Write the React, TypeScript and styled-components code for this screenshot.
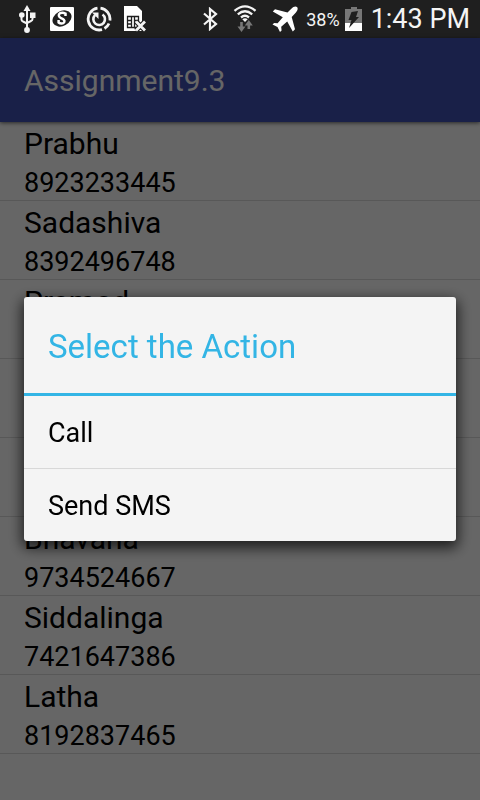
import React from "react";
import styled, { createGlobalStyle } from "styled-components";

const GlobalStyle = createGlobalStyle`
  *, *::before, *::after { box-sizing: border-box; }
  body {
    margin: 0;
    background: #ffffff;
    color: #000000;
    font-family: Roboto, "Noto Sans", sans-serif;
  }
`;

const Screen = styled.div`
  display: flex;
  flex-direction: column;
  min-height: 100vh;
`;

const StatusBar = styled.header`
  display: flex;
  align-items: center;
  justify-content: space-between;
  height: 38px;
  padding: 0 10px 0 18px;
  background: #1f1f1f;
  color: #f4f4f4;
`;

const IconGroup = styled.div<{ $gap: number }>`
  display: flex;
  align-items: center;
  gap: ${({ $gap }) => $gap}px;
`;

const Icon = styled.svg`
  display: block;
  flex: none;
`;

const Battery = styled.div`
  display: flex;
  align-items: center;
  gap: 5px;
  font-size: 18px;
`;

const Clock = styled.time`
  font-size: 27px;
  line-height: 38px;
  white-space: nowrap;
`;

const AppBar = styled.div`
  display: flex;
  align-items: center;
  height: 84px;
  padding: 0 24px;
  background: #3f51b5;
  box-shadow: 0 1px 4px rgba(0, 0, 0, 0.6);
`;

const AppTitle = styled.h1`
  margin: 0;
  color: #ffffff;
  font-size: 30px;
  font-weight: 400;
`;

const ContactList = styled.ul`
  margin: 0;
  padding: 0;
  list-style: none;
`;

const Contact = styled.li`
  min-height: 79px;
  padding: 0 24px;
  border-bottom: 1px solid #dddddd;
`;

const ContactName = styled.div`
  font-size: 30px;
  line-height: 44px;
`;

const ContactNumber = styled.div`
  font-size: 27px;
  line-height: 34px;
`;

const Scrim = styled.div`
  position: fixed;
  inset: 38px 0 0;
  display: flex;
  align-items: center;
  justify-content: center;
  padding: 0 24px;
  background: rgba(0, 0, 0, 0.6);
`;

const Dialog = styled.section`
  width: 100%;
  overflow: hidden;
  border-radius: 3px;
  background: #f4f4f4;
  box-shadow: 0 5px 14px 2px rgba(0, 0, 0, 0.7);
`;

const DialogTitle = styled.h2`
  margin: 0;
  padding: 4px 24px 0;
  border-bottom: 3px solid #33b5e5;
  color: #33b5e5;
  font-size: 33px;
  font-weight: 400;
  line-height: 92px;
`;

const Action = styled.button`
  display: block;
  width: 100%;
  padding: 2px 24px 0;
  border: 0;
  background: transparent;
  color: #000000;
  font-family: inherit;
  font-size: 27px;
  line-height: 70px;
  text-align: left;

  & + & {
    border-top: 1px solid #d8d8d8;
  }
`;

const contacts = [
  { name: "Prabhu", number: "8923233445" },
  { name: "Sadashiva", number: "8392496748" },
  { name: "Pramod" },
  {},
  {},
  { name: "Bhavana", number: "9734524667" },
  { name: "Siddalinga", number: "7421647386" },
  { name: "Latha", number: "8192837465" },
];

const UsbIcon = () => (
  <Icon width="20" height="28" viewBox="0 0 20 28" fill="none" stroke="#f4f4f4" strokeWidth="2">
    <path d="M9 5v19M3.500 10v4.500q0 1.500 1.500 2L9 18.500M14.500 10v4q0 1.500-1.500 2L9 18" />
    <path d="M9 0l3.500 6h-7z" fill="#f4f4f4" stroke="none" />
    <circle cx="3.800" cy="10" r="2.800" fill="#f4f4f4" stroke="none" />
    <path d="M12 7.500h5.500V13H12z" fill="#f4f4f4" stroke="none" />
    <circle cx="9" cy="25" r="2.900" fill="#f4f4f4" stroke="none" />
  </Icon>
);

const SIcon = () => (
  <Icon width="24" height="24" viewBox="0 0 24 24">
    <rect width="24" height="24" rx="1" fill="#ffffff" />
    <ellipse cx="12" cy="11.500" rx="10" ry="7.500" transform="rotate(-28 12 11.500)" fill="#1f1f1f" />
    <path d="M15.500 9V6.500q-3-1.500-5.300-.3c-2.400 1.400-1.500 3.900.8 4.900 2.500 1.100 4.300 2 3.100 4.300-1.200 1.800-4 1.200-5.500 0V13" fill="none" stroke="#ffffff" strokeWidth="2.500" />
  </Icon>
);

const SyncIcon = () => (
  <Icon width="26" height="26" viewBox="0 0 26 26" fill="none" stroke="#f4f4f4">
    <path d="M14.500 2.100A11 11 0 0 1 23.900 14.500M23 17.500A11 11 0 0 1 18.500 22.500M16 23.600A11 11 0 1 1 11.500 2.100" strokeWidth="2.800" />
    <path d="M16.500 8.500A5.800 5.800 0 1 1 9 9.200" strokeWidth="2.600" />
    <path d="M6 6.500h6.500v6.500z" fill="#f4f4f4" stroke="none" />
  </Icon>
);

const SimIcon = () => (
  <Icon width="22" height="26" viewBox="0 0 22 26">
    <path d="M0 0h13l5 5v20H0z" fill="#ffffff" />
    <path d="M3.500 10.500h11v11h-11zM3.500 14.500h4M3.500 18h4M10.500 14.500h4M7.500 10.500v11M10.500 10.500v11" fill="none" stroke="#1f1f1f" strokeWidth="1.300" />
    <path d="M12 15.500l9 9M21 15.500l-9 9" stroke="#1f1f1f" strokeWidth="5" />
    <path d="M12 15.500l9 9M21 15.500l-9 9" stroke="#f4f4f4" strokeWidth="2.800" />
  </Icon>
);

const BluetoothIcon = () => (
  <Icon width="15" height="24" viewBox="0 0 15 24" fill="none" stroke="#f4f4f4" strokeWidth="2.200">
    <path d="M1 6.500l12 10.500-6 5V2l6 5L1 17.500" />
  </Icon>
);

const WifiIcon = () => (
  <Icon width="24" height="28" viewBox="0 0 24 28" fill="none" stroke="#f4f4f4" strokeWidth="2.300">
    <path d="M1.500 5.800Q12-3 22.500 5.800M4.800 9.300q7.200-6 14.400 0M8 12.500q4-3.400 8 0" />
    <path d="M9.300 14.200q2.700-2 5.400 0L12 17z" fill="#f4f4f4" stroke="none" />
    <path d="M8.500 27L4.500 21.500h2.700V17h2.600v4.500h2.700zM15.800 15l4 5.500h-2.700V24h-2.600v-3.500h-2.700z" fill="#777777" stroke="none" />
  </Icon>
);

const PlaneIcon = () => (
  <Icon width="26" height="26" viewBox="0 0 26 26" fill="#ffffff">
    <path d="M25 1c-1.600-1.300-4 0-5.400 1.400L15.500 6.500 3 3.300.8 5.500l10 5.700-5.200 6.100-3.500-.4L.5 18.500l5 2.500 2.500 5 1.600-1.600-.4-3.700 6-5.100 5.600 9.900 2.200-2.200-3.300-12.400 4-4.200C25.200 5.200 26.500 2.600 25 1z" />
  </Icon>
);

const BatteryIcon = () => (
  <Icon width="18" height="24" viewBox="0 0 18 24">
    <path d="M6 0h6v2h5v14H0V2h6z" fill="#777777" />
    <path d="M0 16h17v8H0z" fill="#ffffff" />
    <path d="M6.500 5L13 4l-2 6h3L4 21l2.500-8H3.500z" fill="#1f1f1f" />
  </Icon>
);

export default function App() {
  return (
    <Screen>
      <GlobalStyle />
      <StatusBar>
        <IconGroup $gap={12}>
          <UsbIcon />
          <SIcon />
          <SyncIcon />
          <SimIcon />
        </IconGroup>
        <IconGroup $gap={8}>
          <IconGroup $gap={15}>
            <BluetoothIcon />
            <WifiIcon />
            <PlaneIcon />
          </IconGroup>
          <Battery>
            38%
            <BatteryIcon />
          </Battery>
          <Clock>1:43 PM</Clock>
        </IconGroup>
      </StatusBar>
      <AppBar>
        <AppTitle>Assignment9.3</AppTitle>
      </AppBar>
      <ContactList>
        {contacts.map((contact, index) => (
          <Contact key={index}>
            {contact.name && <ContactName>{contact.name}</ContactName>}
            {contact.number && <ContactNumber>{contact.number}</ContactNumber>}
          </Contact>
        ))}
      </ContactList>
      <Scrim>
        <Dialog role="dialog" aria-modal="true" aria-labelledby="action-title">
          <DialogTitle id="action-title">Select the Action</DialogTitle>
          <Action type="button">Call</Action>
          <Action type="button">Send SMS</Action>
        </Dialog>
      </Scrim>
    </Screen>
  );
}
